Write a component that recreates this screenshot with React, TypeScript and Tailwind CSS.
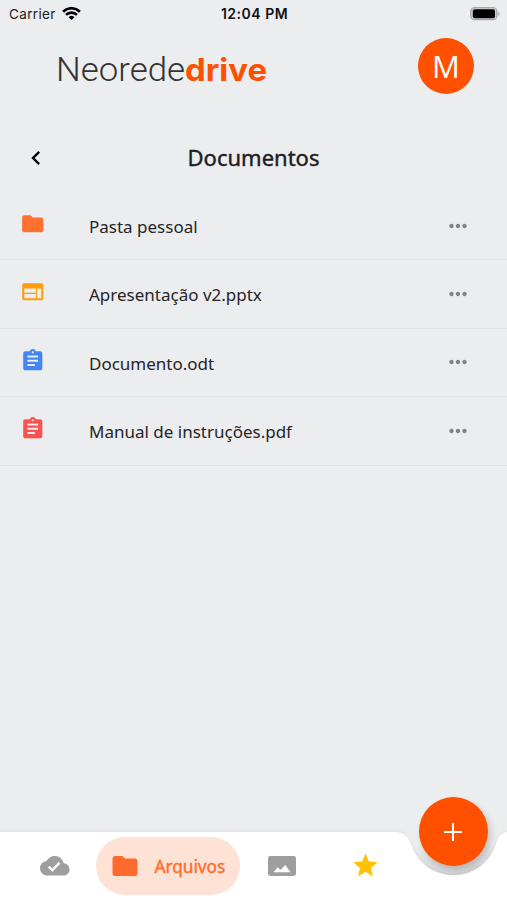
import { useState } from 'react'
import type { IconType } from 'react-icons'
import {
  MdAssignment,
  MdChevronLeft,
  MdCloudDone,
  MdFolder,
  MdMoreHoriz,
  MdStar,
  MdWeb,
} from 'react-icons/md'

type FileItem = {
  name: string
  icon: IconType
  color: string
}

const files: FileItem[] = [
  { name: 'Pasta pessoal', icon: MdFolder, color: 'text-[#ff7033]' },
  { name: 'Apresentação v2.pptx', icon: MdWeb, color: 'text-[#ff9d0a]' },
  { name: 'Documento.odt', icon: MdAssignment, color: 'text-[#4285f4]' },
  { name: 'Manual de instruções.pdf', icon: MdAssignment, color: 'text-[#ff5050]' },
]

function StatusBar() {
  return (
    <div className="flex h-7 items-center pr-[7px] pl-[9px] font-['Inter','Liberation_Sans',sans-serif] text-[13.5px] text-[#222]">
      <div className="flex flex-1 items-center gap-[6px]">
        <span className="tracking-[0.35px]">Carrier</span>
        <svg width="19" height="14" viewBox="0 0 19 14" fill="none" stroke="#000" strokeWidth="2.7">
          <path d="M1.1 4.7a12 12 0 0 1 16.8 0" />
          <path d="M4 7.9a7.9 7.9 0 0 1 11 0" />
          <path d="M9.5 13.1 6.6 10.2a4.1 4.1 0 0 1 5.8 0z" fill="#000" stroke="none" />
        </svg>
      </div>
      <span className="text-sm font-semibold tracking-[0.5px] text-[#111]">12:04 PM</span>
      <div className="flex flex-1 justify-end">
        <svg width="30" height="14" viewBox="0 0 30 14">
          <rect x="0.8" y="0.7" width="26" height="12" rx="3.8" fill="#d0d1d1" stroke="#a5a6a6" strokeWidth="1.3" />
          <rect x="2.8" y="2.2" width="22.2" height="9" rx="2" fill="#000" />
          <path d="M28.3 4.6c1.7.7 1.7 3.7 0 4.4z" fill="#a5a6a6" />
        </svg>
      </div>
    </div>
  )
}

function Logo() {
  return (
    <svg width="214" height="40" viewBox="0 0 214 40" className="text-[33px]">
      <text
        x="0"
        y="31"
        textLength="129"
        lengthAdjust="spacingAndGlyphs"
        fill="#333"
        className="font-['Roboto','Liberation_Sans',sans-serif] font-light"
      >
        Neorede
      </text>
      <text
        x="129"
        y="31"
        textLength="82"
        lengthAdjust="spacingAndGlyphs"
        fill="#ff4f00"
        className="font-['Inter','Liberation_Sans',sans-serif] text-[31.5px] font-bold"
      >
        drive
      </text>
    </svg>
  )
}

function FileRow({ file }: { file: FileItem }) {
  const Icon = file.icon
  return (
    <li className="flex h-[68.4px] items-center border-b border-[#dfe1e2] pr-9 pl-5">
      <Icon size={25.5} className={`mb-1 ${file.color}`} />
      <span className="mt-[2px] ml-[43.5px] flex-1 text-[17px] text-[#252525]">{file.name}</span>
      <button aria-label="Mais">
        <MdMoreHoriz size={26} className="text-[#808182]" />
      </button>
    </li>
  )
}

function BottomBar() {
  const [tab, setTab] = useState('files')

  return (
    <nav className="relative h-[69px]">
      {/* bar with the notch cut out for the add button */}
      <svg width="507" height="69" viewBox="0 0 507 69" className="absolute inset-0 drop-shadow-[0_-1px_1px_rgba(0,0,0,0.06)]">
        <path d="M0 1H394C405 1 408 6 411 13A44.5 44.5 0 0 0 496 13C498 5 501 2 507 1V69H0z" fill="#fff" />
      </svg>
      {/* shade inside the notch, fading out towards its top */}
      <svg width="507" height="69" viewBox="0 0 507 69" className="absolute inset-0">
        <defs>
          <linearGradient id="notch" x1="0" y1="0" x2="0" y2="1">
            <stop offset="0" stopColor="#000" stopOpacity="0" />
            <stop offset="1" stopColor="#000" stopOpacity="0.1" />
          </linearGradient>
        </defs>
        <path d="M411 13A44.5 44.5 0 0 0 496 13z" fill="url(#notch)" />
      </svg>
      <div className="relative flex h-full items-center">
        <button className="ml-10 text-[#9e9e9e]" onClick={() => setTab('sync')}>
          <MdCloudDone size={29.5} />
        </button>
        <button
          className={`ml-[26.5px] flex h-[58px] w-36 items-center rounded-full pl-[14px] text-[#ff6b2d] ${
            tab === 'files' ? 'bg-[#ffe2d6]' : ''
          }`}
          onClick={() => setTab('files')}
        >
          <MdFolder size={30} />
          <span className="mt-[2px] ml-[14.5px] text-[17.2px] [-webkit-text-stroke:0.4px_#ff6b2d]">Arquivos</span>
        </button>
        <button className="ml-7" onClick={() => setTab('photos')}>
          <svg width="28" height="20" viewBox="0 0 28 20">
            <rect width="28" height="20" rx="2.4" fill="#9e9e9e" />
            <path d="M5.5 16.2 9.6 11.2l3 2.6L17.3 9l5.2 7.2z" fill="#fff" />
          </svg>
        </button>
        <button className="ml-[54.5px] text-[#ffc107]" onClick={() => setTab('starred')}>
          <MdStar size={29} />
        </button>
      </div>
      <button
        aria-label="Adicionar"
        className="absolute -top-[34px] left-[419px] flex h-[69px] w-[69px] items-center justify-center rounded-full bg-[#ff5000] pr-px shadow-[3px_4px_7px_rgba(0,0,0,0.18)]"
      >
        <svg width="18" height="18" viewBox="0 0 18 18" stroke="#fff" strokeWidth="2">
          <path d="M9 0v18M0 9h18" />
        </svg>
      </button>
    </nav>
  )
}

export default function App() {
  return (
    <div className="flex h-[900px] w-[507px] flex-col overflow-hidden bg-[#ecedef] font-['Noto_Sans','Open_Sans',sans-serif]">
      <StatusBar />
      <header className="flex h-[98px] items-start justify-between pt-[10px] pr-[33px] pl-14">
        <div className="pt-3">
          <Logo />
        </div>
        <div className="flex h-14 w-14 items-center justify-center rounded-full bg-[#ff5000] font-['Open_Sans'] text-[31px] text-white">
          M
        </div>
      </header>
      <div className="mb-[2px] flex h-[64px] items-center pl-[22px]">
        <button aria-label="Voltar" className="w-[26px]">
          <MdChevronLeft size={28} />
        </button>
        <h1 className="mr-12 mb-px flex-1 text-center text-[22px] text-[#202020] [-webkit-text-stroke:0.4px_#202020]">
          Documentos
        </h1>
      </div>
      <ul className="flex-1">
        {files.map((file) => (
          <FileRow key={file.name} file={file} />
        ))}
      </ul>
      <BottomBar />
    </div>
  )
}
